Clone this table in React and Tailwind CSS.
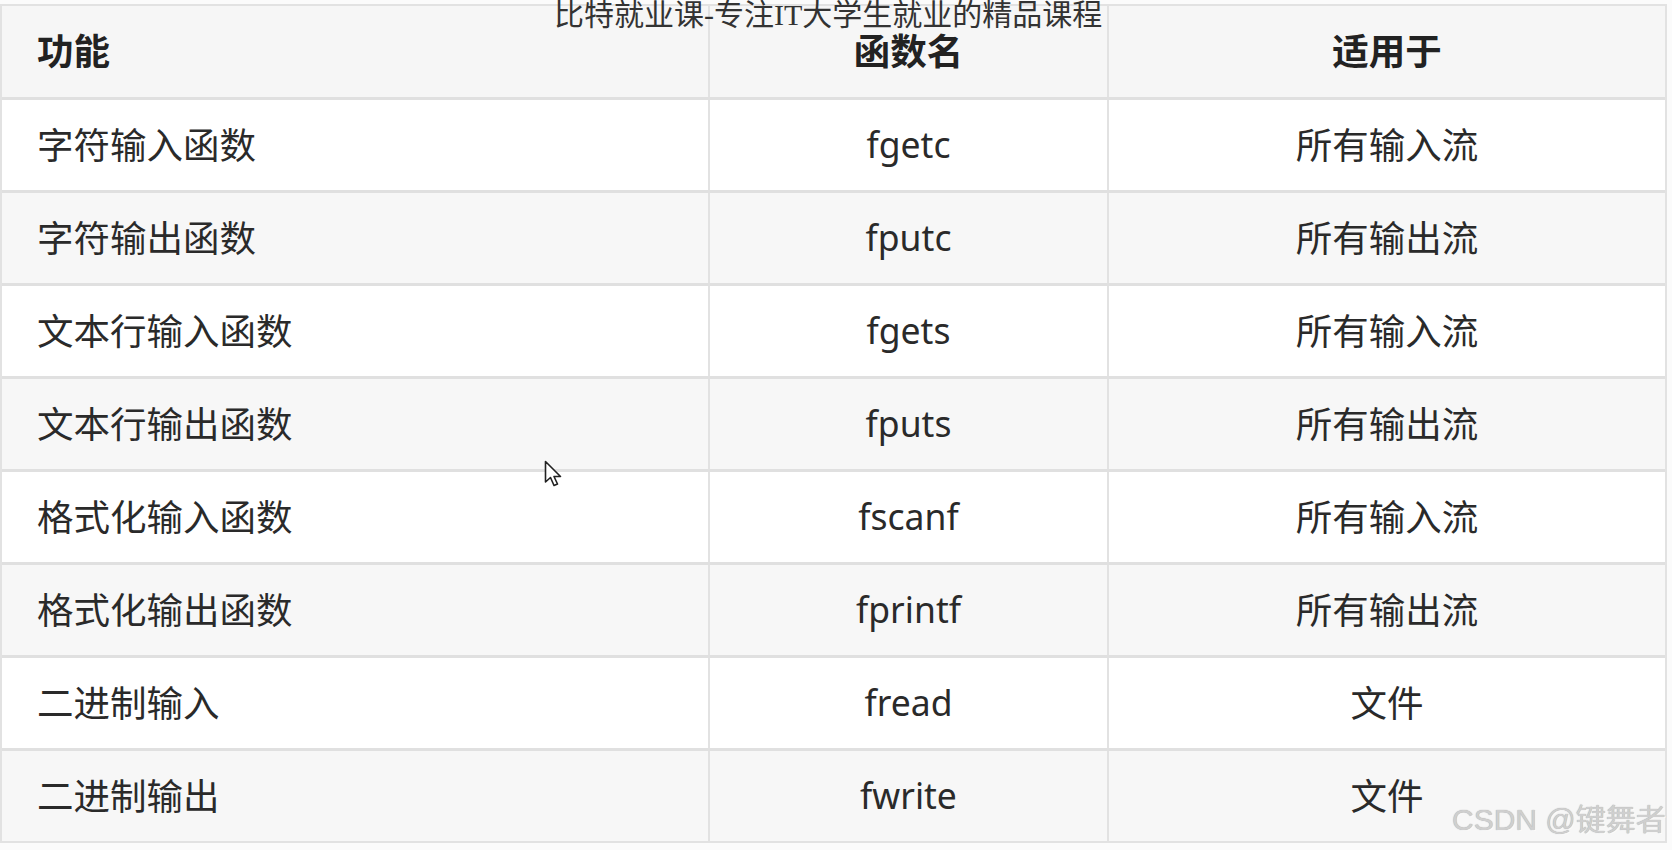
import React from "react";

const rows = [
  ["字符输入函数", "fgetc", "所有输入流"],
  ["字符输出函数", "fputc", "所有输出流"],
  ["文本行输入函数", "fgets", "所有输入流"],
  ["文本行输出函数", "fputs", "所有输出流"],
  ["格式化输入函数", "fscanf", "所有输入流"],
  ["格式化输出函数", "fprintf", "所有输出流"],
  ["二进制输入", "fread", "文件"],
  ["二进制输出", "fwrite", "文件"],
];

const font = { fontFamily: '"Noto Sans", "Noto Sans CJK SC", sans-serif' };

export default function App() {
  return (
    <div className="relative w-[1672px] h-[850px] overflow-hidden bg-[#fbfbfb] pt-[4px]" style={font}>
      <div className="w-[1667px] border-[2px] border-[#e2e2e2] bg-white">
        <div className="grid grid-cols-[708px_399px_556px] h-[94px] bg-[#f6f6f6] border-b-[3px] border-[#e0e0e0] text-[36.5px] font-bold text-[#222]">
          <div className="flex items-center pl-[35px] border-r-[2px] border-[#e2e2e2]">功能</div>
          <div className="flex items-center justify-center border-r-[2px] border-[#e2e2e2]">函数名</div>
          <div className="flex items-center justify-center">适用于</div>
        </div>
        {rows.map((r, i) => (
          <div
            key={i}
            className={`grid grid-cols-[708px_399px_556px] text-[36.5px] text-[#2a2a2a] ${i % 2 === 0 ? "bg-white" : "bg-[#f7f7f7]"} ${i < rows.length - 1 ? "h-[93px] border-b-[3px] border-[#e0e0e0]" : "h-[90px]"}`}
          >
            <div className="flex items-center pl-[35px] border-r-[2px] border-[#e2e2e2]">{r[0]}</div>
            <div className="flex items-center justify-center text-[35.5px] border-r-[2px] border-[#e2e2e2]">{r[1]}</div>
            <div className="flex items-center justify-center">{r[2]}</div>
          </div>
        ))}
      </div>

      <div
        className="absolute left-[554px] top-[-5px] text-[30px] leading-[40px] text-[#333] whitespace-nowrap"
        style={{ fontFamily: '"Liberation Serif", "Noto Sans CJK SC", serif' }}
      >
        比特就业课-专注IT大学生就业的精品课程
      </div>

      <svg className="absolute left-[544px] top-[460px]" width="20" height="30" viewBox="0 0 20 30">
        <path d="M1.5 1.5 L1.5 22 L6.5 17.5 L10 25.5 L13.5 24 L10 16.5 L16.5 16.5 Z" fill="#fff" stroke="#222" strokeWidth="1.6" strokeLinejoin="round" />
      </svg>

      <div
        className="absolute left-[1452px] top-[800px] text-[30px] leading-[40px] text-[#cfcfcf] whitespace-nowrap"
        style={{ fontFamily: '"Liberation Sans", "Noto Sans CJK SC", sans-serif', textShadow: "0 0 1px #999, 1px 1px 0 #fff" }}
      >
        CSDN @键舞者
      </div>
    </div>
  );
}
